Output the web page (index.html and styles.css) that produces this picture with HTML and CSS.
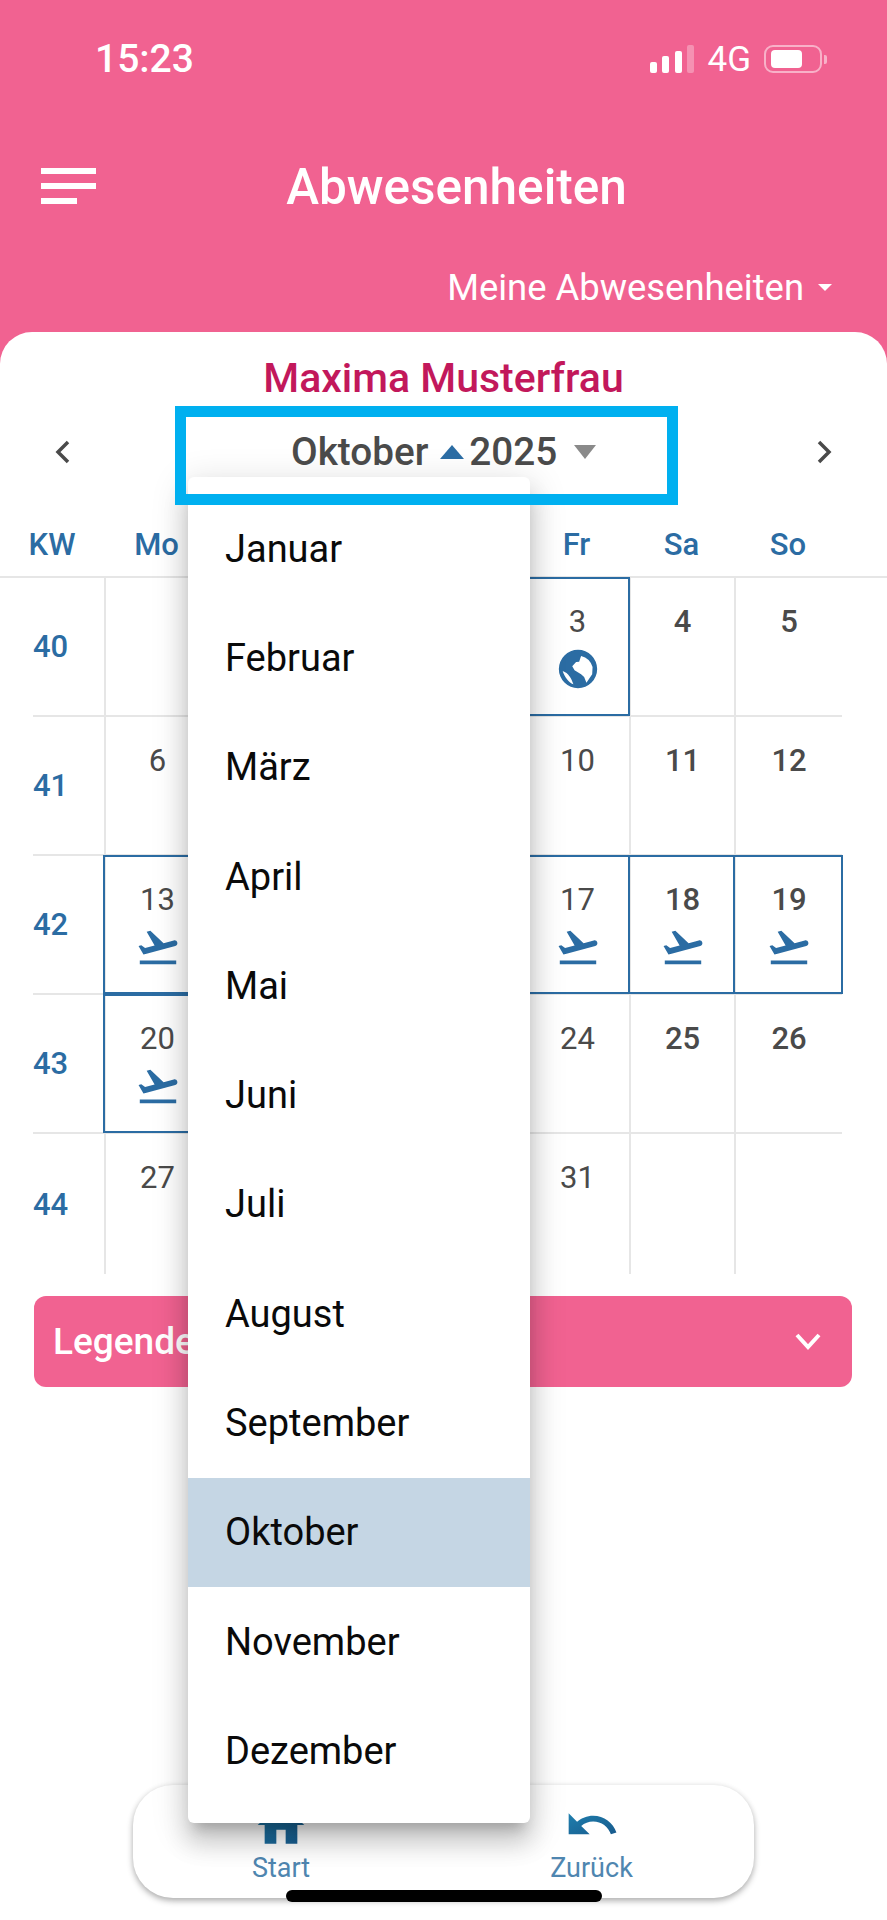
FILE: index.html
```html
<!DOCTYPE html>
<html lang="de">
<head>
    <meta charset="UTF-8">
    <title>Abwesenheiten</title>
    <link rel="stylesheet" href="styles.css">
</head>
<body>
    <svg class="sprites" width="0" height="0">
        <symbol id="plane" viewBox="0 0 24 24"><path d="M2.5 19h19v2h-19zm19.57-9.36c-.21-.8-1.04-1.28-1.84-1.06L14.92 10l-6.9-6.43-1.93.51 4.14 7.17-4.97 1.33-1.97-1.54-1.45.39 1.82 3.16.77 1.33 1.6-.43 5.31-1.42 4.35-1.16L21 11.49c.81-.23 1.28-1.05 1.07-1.85z"/></symbol>
        <symbol id="globe" viewBox="0 0 24 24"><path fill-rule="evenodd" d="M12 2a10 10 0 1 0 0 20 10 10 0 0 0 0-20zM9 10.6l2-2.2 1.6-.2 1-3a8.3 8.3 0 0 1 6 5.8l-.2 3.8-3 4.4-1.2-3-1.6-1.4-3.4-2.1zM4 13c1 3 3 6 5.6 6.9C8.6 17 7 14 4 13z"/></symbol>
        <linearGradient id="navGrad" x1="0" y1="0" x2="1" y2="1">
            <stop offset="0" stop-color="#1f7fae"/>
            <stop offset="1" stop-color="#185a8c"/>
        </linearGradient>
    </svg>

    <div class="page">
        <header class="top">
            <div class="status">
                <span class="time">15:23</span>
                <div class="status-right">
                    <div class="signal">
                        <i class="bar1"></i><i class="bar2"></i><i class="bar3"></i><i class="bar4"></i>
                    </div>
                    <span class="net">4G</span>
                    <div class="battery"><i></i></div>
                    <i class="battery-nub"></i>
                </div>
            </div>

            <div class="titlebar">
                <div class="burger"><i></i><i></i><i class="short"></i></div>
                <h1>Abwesenheiten</h1>
            </div>

            <div class="filter">Meine Abwesenheiten <i class="caret"></i></div>
        </header>

        <main class="sheet">
            <h2 class="person">Maxima Musterfrau</h2>

            <div class="monthbar">
                <svg class="arrow arrow-left" width="15" height="24" viewBox="0 0 15 24"><path d="M13 2 3 12l10 10"/></svg>
                <div class="picker">
                    <span>Oktober</span>
                    <i class="tri-up"></i>
                    <span>2025</span>
                    <i class="tri-down"></i>
                </div>
                <svg class="arrow arrow-right" width="15" height="24" viewBox="0 0 15 24"><path d="M2 2l10 10L2 22"/></svg>
            </div>

            <div class="weekdays">
                <span>KW</span><span>Mo</span><span></span><span></span><span></span><span>Fr</span><span>Sa</span><span>So</span>
            </div>

            <!-- Di bis Do liegen unter dem offenen Dropdown -->
            <div class="week">
                <div class="kw">40</div>
                <div class="day"></div>
                <div class="day"></div>
                <div class="day"></div>
                <div class="day"></div>
                <div class="day marked">3<svg class="mark-globe"><use href="#globe"/></svg></div>
                <div class="day we">4</div>
                <div class="day we">5</div>
            </div>
            <div class="week">
                <div class="kw">41</div>
                <div class="day">6</div>
                <div class="day"></div>
                <div class="day"></div>
                <div class="day"></div>
                <div class="day">10</div>
                <div class="day we">11</div>
                <div class="day we">12</div>
            </div>
            <div class="week">
                <div class="kw">42</div>
                <div class="day marked">13<svg class="mark-plane"><use href="#plane"/></svg></div>
                <div class="day marked"></div>
                <div class="day marked"></div>
                <div class="day marked"></div>
                <div class="day marked">17<svg class="mark-plane"><use href="#plane"/></svg></div>
                <div class="day marked we">18<svg class="mark-plane"><use href="#plane"/></svg></div>
                <div class="day marked we">19<svg class="mark-plane"><use href="#plane"/></svg></div>
            </div>
            <div class="week">
                <div class="kw">43</div>
                <div class="day marked">20<svg class="mark-plane"><use href="#plane"/></svg></div>
                <div class="day"></div>
                <div class="day"></div>
                <div class="day"></div>
                <div class="day">24</div>
                <div class="day we">25</div>
                <div class="day we">26</div>
            </div>
            <div class="week last">
                <div class="kw">44</div>
                <div class="day">27</div>
                <div class="day"></div>
                <div class="day"></div>
                <div class="day"></div>
                <div class="day">31</div>
                <div class="day"></div>
                <div class="day"></div>
            </div>

            <div class="legend">
                <span>Legende</span>
                <svg class="legend-arrow" width="26" height="17" viewBox="0 0 26 17"><path d="M2 2l11 12L24 2"/></svg>
            </div>

            <nav class="bottomnav">
                <a class="navitem">
                    <svg class="navicon" viewBox="0 0 24 24"><path d="M10 20v-6h4v6h5v-8h3L12 3 2 12h3v8z"/></svg>
                    Start
                </a>
                <a class="navitem">
                    <svg class="navicon" viewBox="0 0 24 24"><path d="M12.5 8c-2.65 0-5.05.99-6.9 2.6L2 7v9h9l-3.62-3.62c1.39-1.16 3.16-1.88 5.12-1.88 3.54 0 6.55 2.31 7.6 5.5l2.37-.78C21.08 11.03 17.15 8 12.5 8z"/></svg>
                    Zurück
                </a>
            </nav>
        </main>

        <!-- offenes Monats-Dropdown -->
        <ul class="monthmenu">
            <li>Januar</li>
            <li>Februar</li>
            <li>März</li>
            <li>April</li>
            <li>Mai</li>
            <li>Juni</li>
            <li>Juli</li>
            <li>August</li>
            <li>September</li>
            <li class="selected">Oktober</li>
            <li>November</li>
            <li>Dezember</li>
        </ul>

        <div class="homebar"></div>
    </div>
</body>
</html>
```

FILE: styles.css
```css
* { box-sizing: border-box; }
body { margin: 0; font-family: Roboto, "Liberation Sans", sans-serif; color: #4a4a4a; }
.sprites { position: absolute; }
.page { position: relative; display: flex; flex-direction: column; width: 887px; height: 1920px; overflow: hidden; background-color: #f16291; }
i { display: block; }

/* header */
.top { color: #fff; }
.status { display: flex; justify-content: space-between; align-items: center; height: 42px; margin-top: 38px; padding: 0 60px 0 95px; }
.time { font-size: 39px; font-weight: 500; }
.status-right { display: flex; align-items: center; }
.signal { display: flex; align-items: flex-end; gap: 5.5px; height: 28px; }
.signal i { width: 7px; background-color: #fff; border-radius: 2px; }
.bar1 { height: 11px; }
.bar2 { height: 17px; }
.bar3 { height: 22px; }
.signal .bar4 { height: 28px; background-color: rgba(255,255,255,0.3); }
.net { margin: 0 13px 0 13px; font-size: 35px; }
.battery { width: 58px; height: 28px; padding: 3px 5px; border: 2px solid rgba(255,255,255,0.5); border-radius: 9px; }
.battery i { width: 31px; height: 18px; background-color: #fff; border-radius: 4px; }
.battery-nub { width: 3px; height: 9px; margin-left: 2px; background-color: rgba(255,255,255,0.5); border-radius: 0 2px 2px 0; }

.titlebar { display: grid; grid-template-columns: 55px 1fr 55px; align-items: center; height: 60px; margin-top: 75px; padding: 0 15px 0 41px; }
.titlebar h1 { margin: 0; padding-top: 3px; font-size: 49.5px; font-weight: 500; text-align: center; }
.burger { display: flex; flex-direction: column; gap: 9px; }
.burger i { height: 6px; background-color: #fff; }
.burger .short { width: 36px; }

.filter { display: flex; justify-content: flex-end; align-items: center; gap: 14px; height: 40px; margin-top: 52px; padding-right: 55px; font-size: 36.4px; }
.caret { border-left: 7px solid transparent; border-right: 7px solid transparent; border-top: 7px solid #fff; }

/* weisses Blatt */
.sheet { flex: 1; display: flex; flex-direction: column; margin-top: 25px; padding-top: 24px; background-color: #fff; border-radius: 32px 32px 0 0; }
.person { margin: 0; font-size: 41px; line-height: 44px; font-weight: 500; color: #c2185b; text-align: center; }

.monthbar { display: grid; grid-template-columns: 175px 503px 1fr; align-items: center; height: 99px; margin-top: 6px; }
.arrow { margin-bottom: 8px; fill: none; stroke: #4a4a4a; stroke-width: 3.5; }
.arrow-left { margin-left: 55px; }
.arrow-right { justify-self: end; margin-right: 55px; }
.picker { position: relative; z-index: 3; display: flex; align-items: center; height: 99px; padding: 0 0 8px 105px; border: 11px solid #00b0f0; font-size: 38.7px; font-weight: 500; }
.tri-up { margin: 0 5px 0 12px; border-left: 12px solid transparent; border-right: 12px solid transparent; border-bottom: 14px solid #2b6ca3; }
.tri-down { margin-left: 17px; border-left: 11px solid transparent; border-right: 11px solid transparent; border-top: 14px solid #8a8a8a; }

.weekdays { display: grid; grid-template-columns: 104px repeat(6, 105px) 108px; height: 73px; padding-top: 21px; border-bottom: 2px solid #e6e6e6; font-size: 31px; font-weight: 500; color: #2b6ca3; text-align: center; }

.week { display: grid; grid-template-columns: 71px repeat(6, 105px) 108px; height: 139px; margin-left: 33px; width: 809px; border-bottom: 2px solid #e6e6e6; }
.week.last { height: 140px; border-bottom: none; }
.kw { align-self: center; font-size: 31px; font-weight: 500; color: #2b6ca3; }
.day { display: flex; flex-direction: column; align-items: center; padding-top: 26px; border-left: 2px solid #e6e6e6; font-size: 31px; line-height: 36px; }
.day.we { font-weight: 500; }
.day.marked { position: relative; outline: 2px solid #2b6ca3; outline-offset: -1px; }
.mark-plane { width: 46px; height: 46px; margin-top: 6px; fill: #2b6ca3; }
.mark-globe { width: 46px; height: 46px; margin-top: 6px; fill: #2b6ca3; }

.legend { display: flex; justify-content: space-between; align-items: center; height: 91px; margin: 22px 35px 0 34px; padding: 0 31px 0 19px; background-color: #f16291; border-radius: 12px; color: #fff; font-size: 37px; font-weight: 500; }
.legend-arrow { fill: none; stroke: #fff; stroke-width: 4; }

.bottomnav { display: grid; grid-template-columns: 296px 1fr; width: 621px; height: 113px; margin: auto 0 22px 133px; padding-top: 12px; background-color: #fff; border-radius: 40px; box-shadow: 0 3px 6px rgba(0,0,0,0.3), 0 0 6px rgba(0,0,0,0.05); }
.navitem { display: flex; flex-direction: column; align-items: center; font-size: 27px; line-height: 30px; color: #4f86b0; }
.navicon { width: 56px; height: 56px; fill: url(#navGrad); }

/* dropdown liegt ueber dem Kalender */
.monthmenu { position: absolute; z-index: 2; left: 188px; top: 477px; width: 342px; height: 1346px; margin: 0; padding: 17px 0; list-style: none; background-color: #fff; border-radius: 6px; box-shadow: 0 12px 12px -7px rgba(0,0,0,0.2), 0 20px 25px 2px rgba(0,0,0,0.14), 0 8px 35px 5px rgba(0,0,0,0.12); }
.monthmenu li { display: flex; align-items: center; height: 109.3px; padding-left: 37px; font-size: 38px; color: #0a0a0a; }
.monthmenu .selected { background-color: #c5d6e4; }

.homebar { position: absolute; z-index: 4; left: 286px; bottom: 18px; width: 316px; height: 12px; background-color: #000; border-radius: 6px; }
```
